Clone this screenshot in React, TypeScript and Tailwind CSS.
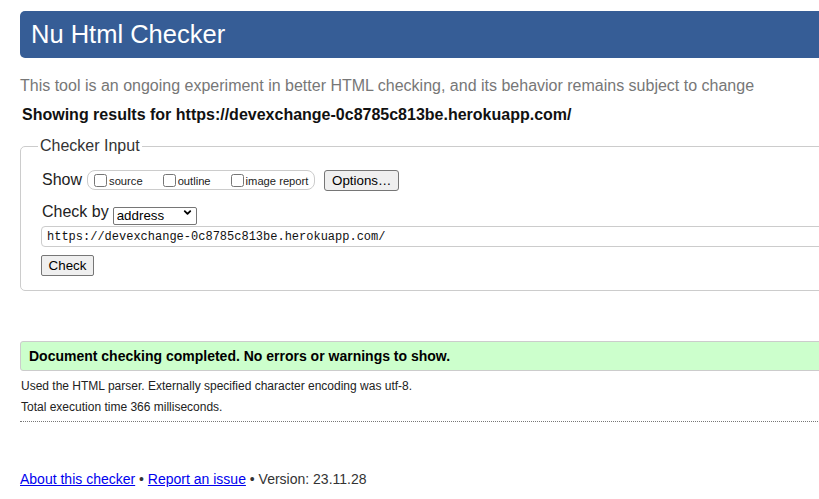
import { ChevronDown } from 'lucide-react'

const URL = 'https://devexchange-0c8785c813be.herokuapp.com/'

function Checkbox({ label }: { label: string }) {
  return (
    <label className="flex items-center">
      <input type="checkbox" className="m-0 ml-[6px] mr-[2px] h-[13px] w-[13px]" />
      <span className="mt-[3px] text-[11.2px] text-[#222]">{label}</span>
    </label>
  )
}

function CheckerInput() {
  return (
    <fieldset className="mt-[12px] rounded-[5px] border border-[#ccc] pb-[13px] pl-[21px] pt-[13px]">
      <legend className="ml-[-4px] px-[2px] text-[16px] leading-[20px] text-[#333]">Checker Input</legend>

      <div className="flex h-[22px] items-center">
        <span className="text-[16px] text-[#222]">Show</span>
        <div className="ml-[5px] flex h-[20px] w-[228px] items-center gap-[14px] rounded-[8px] border border-[#ccc]">
          <Checkbox label="source" />
          <Checkbox label="outline" />
          <Checkbox label="image report" />
        </div>
        <button
          type="button"
          className="ml-[9px] h-[21px] rounded-[3px] border border-[#767676] bg-[#efefef] px-[7px] text-[13.33px] text-black"
        >
          Options…
        </button>
      </div>

      <div className="mt-[10px] flex h-[22px] items-center">
        <span className="text-[16px] text-[#222]">Check by</span>
        <div className="relative ml-[4px] h-[18px] w-[84px]">
          <select className="h-full w-full appearance-none rounded-[2px] border border-[#767676] bg-white pl-[3px] text-[13.33px] leading-[16px] text-black">
            <option>address</option>
          </select>
          <ChevronDown
            className="pointer-events-none absolute right-[4px] top-[4px] h-[11px] w-[11px] text-black"
            strokeWidth={4}
          />
        </div>
      </div>

      <div className="ml-[-1px] mt-[3px] flex h-[21px] items-center rounded-[4px] border border-[#ccc] pl-[5px] font-['Liberation_Mono',monospace] text-[12px] text-[#111]">
        {URL}
      </div>

      <button
        type="button"
        className="ml-[-1px] mt-[8px] h-[21px] w-[53px] rounded-[2px] border border-[#767676] bg-[#efefef] text-[13.33px] text-black"
      >
        Check
      </button>
    </fieldset>
  )
}

export default function App() {
  return (
    <div className="h-screen w-screen overflow-hidden bg-white font-['Liberation_Sans',Arial,sans-serif]">
      <div className="w-[1100px] pl-[20px] pt-[11px]">
        <header className="flex h-[47px] items-center rounded-[5px] bg-[#365d96] pl-[11px]">
          <h1 className="text-[25.5px] text-white">Nu Html Checker</h1>
        </header>

        <p className="mt-[19px] text-[16px] leading-[18px] text-[#777]">
          This tool is an ongoing experiment in better HTML checking, and its behavior remains subject to change
        </p>
        <p className="mt-[11px] pl-[2px] text-[16px] font-bold leading-[18px] text-[#111]">Showing results for {URL}</p>

        <CheckerInput />

        <div className="mt-[50px] flex h-[30px] items-center rounded-l-[3px] border border-[#ccc] bg-[#ccffcc] pl-[8px] text-[14px] font-bold text-black">
          Document checking completed. No errors or warnings to show.
        </div>
        <p className="mt-[8px] pl-[1px] text-[12px] leading-[14px] text-[#222]">
          Used the HTML parser. Externally specified character encoding was utf-8.
        </p>
        <p className="mt-[7px] pl-[1px] text-[12px] leading-[14px] text-[#222]">Total execution time 366 milliseconds.</p>
        <hr className="mt-[7px] border-0 border-t border-dotted border-[#777]" />

        <p className="mt-[49px] text-[14px] leading-[16px] text-[#333]">
          <a href="#" className="text-[#0000ee] underline">
            About this checker
          </a>{' '}
          •{' '}
          <a href="#" className="text-[#0000ee] underline">
            Report an issue
          </a>{' '}
          • Version: 23.11.28
        </p>
      </div>
    </div>
  )
}
